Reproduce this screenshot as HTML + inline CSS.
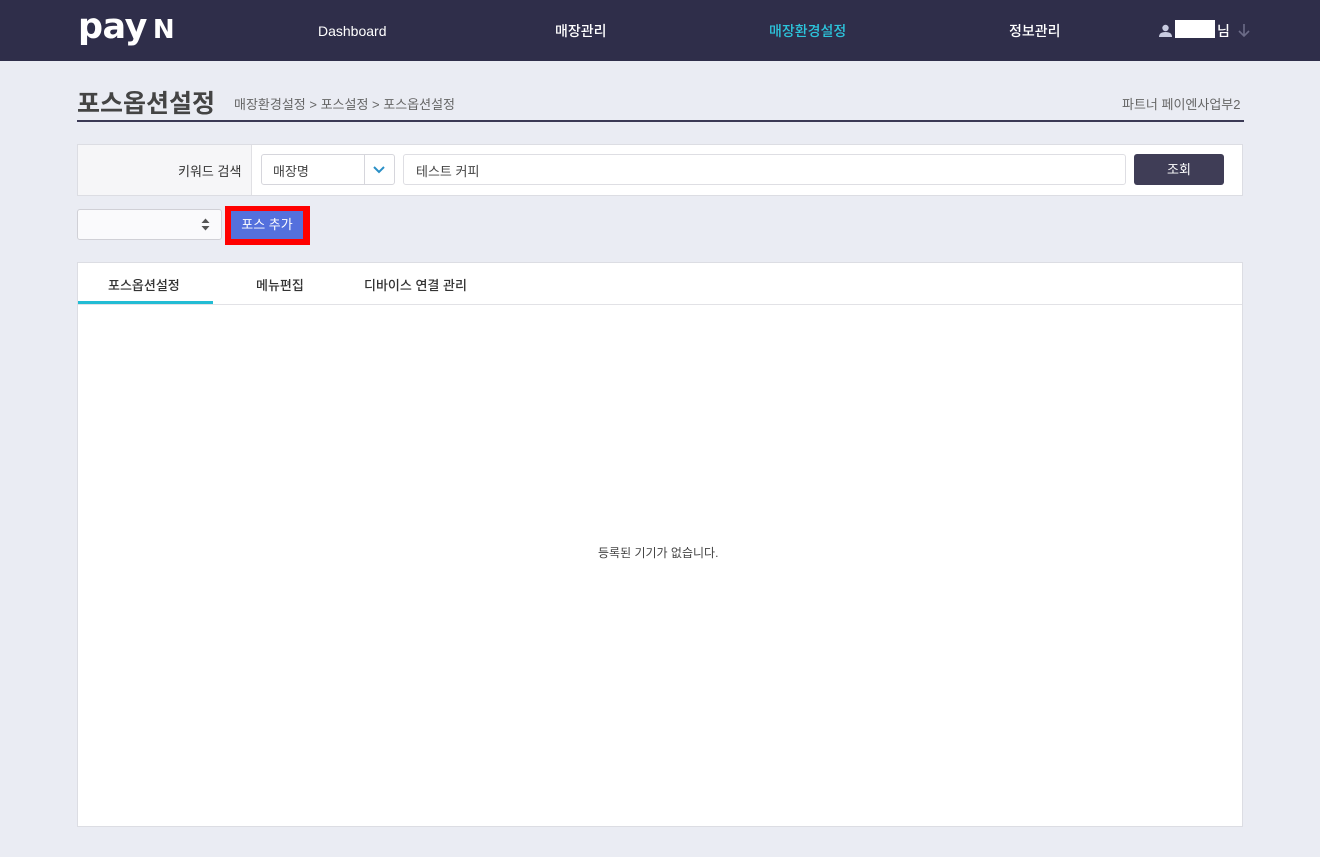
<!DOCTYPE html>
<html><head><meta charset="utf-8"><style>
*{box-sizing:border-box;margin:0;padding:0}
body{width:1320px;height:857px;background:#eaecf3;font-family:"Liberation Sans","Noto Sans CJK KR",sans-serif;position:relative;overflow:hidden;color:#333}
.hdr{position:absolute;left:0;top:0;width:1320px;height:61px;background:#2f2e4a}
.a{position:absolute}
.nav{position:absolute;top:21px;font-size:14px;color:#fff;font-weight:500}
</style></head><body>
<div class="hdr">
<div class="a" style="left:78px;top:7px;font-size:35px;color:#fff;font-weight:bold;letter-spacing:-0.5px;font-family:'DejaVu Sans',sans-serif">pay<span style="font-size:26px;margin-left:6px">N</span></div>
<div class="nav" style="left:318px;top:23px">Dashboard</div>
<div class="nav" style="left:555px">매장관리</div>
<div class="nav" style="left:769px;color:#2cc5dc">매장환경설정</div>
<div class="nav" style="left:1009px">정보관리</div>
<svg class="a" style="left:1159px;top:24px" width="13" height="13" viewBox="0 0 13 13"><circle cx="6.5" cy="4" r="3.2" fill="#c8cbe0"/><path d="M0 13 Q0 8 6.5 8 Q13 8 13 13Z" fill="#c8cbe0"/></svg>
<div class="a" style="left:1175px;top:20px;width:40px;height:18px;background:#fff"></div>
<div class="nav" style="left:1217px;top:21px">님</div>
<svg class="a" style="left:1238px;top:23px" width="12" height="14"><path d="M6 1 V13 M1 8 L6 13 L11 8" stroke="#6c6c88" stroke-width="1.6" fill="none"/></svg>
</div>
<div class="a" style="left:77px;top:84px;font-size:25px;font-weight:bold;color:#444">포스옵션설정</div>
<div class="a" style="left:234px;top:94px;font-size:13px;color:#666">매장환경설정 &gt; 포스설정 &gt; 포스옵션설정</div>
<div class="a" style="left:1122px;top:94px;font-size:13px;color:#666">파트너 페이엔사업부2</div>
<div class="a" style="left:77px;top:120px;width:1167px;height:2px;background:#3b3a55"></div>
<div class="a" style="left:77px;top:144px;width:1166px;height:52px;background:#fff;border:1px solid #dcdde3"></div>
<div class="a" style="left:78px;top:145px;width:174px;height:50px;background:#f6f6f8;border-right:1px solid #e0e0e4"></div>
<div class="a" style="left:178px;top:161px;font-size:13px;color:#333">키워드 검색</div>
<div class="a" style="left:261px;top:154px;width:134px;height:31px;border:1px solid #d6d6dc;border-radius:3px;background:#fff"></div>
<div class="a" style="left:364px;top:155px;width:1px;height:29px;background:#d6d6dc"></div>
<div class="a" style="left:273px;top:161px;font-size:13px;color:#444">매장명</div>
<svg class="a" style="left:373px;top:166px" width="12" height="8"><path d="M1 1 L6 6 L11 1" stroke="#2a8fc6" stroke-width="2" fill="none"/></svg>
<div class="a" style="left:403px;top:154px;width:723px;height:31px;border:1px solid #dedee3;border-radius:3px;background:#fff"></div>
<div class="a" style="left:416px;top:161px;font-size:13px;color:#444">테스트 커피</div>
<div class="a" style="left:1134px;top:154px;width:90px;height:31px;background:#3f3d56;border-radius:3px;color:#fff;font-size:13px;text-align:center;line-height:31px">조회</div>
<div class="a" style="left:77px;top:209px;width:145px;height:31px;border:1px solid #d0d0d6;border-radius:3px;background:#fafafc"></div>
<svg class="a" style="left:201px;top:218px" width="9" height="13"><path d="M0.5 5 L4.5 0.5 L8.5 5Z M0.5 8 L4.5 12.5 L8.5 8Z" fill="#555"/></svg>
<div class="a" style="left:225px;top:206px;width:85px;height:39px;background:#f00"></div>
<div class="a" style="left:231px;top:211px;width:72px;height:28px;background:#5470dd;color:#fff;font-size:13px;text-align:center;line-height:27px">포스 추가</div>
<div class="a" style="left:77px;top:262px;width:1166px;height:565px;background:#fff;border:1px solid #dcdde3"></div>
<div class="a" style="left:78px;top:304px;width:1164px;height:1px;background:#e2e2e6"></div>
<div class="a" style="left:78px;top:301px;width:135px;height:3px;background:#22bcd4"></div>
<div class="a" style="left:108px;top:275px;font-size:13px;color:#333;font-weight:500">포스옵션설정</div>
<div class="a" style="left:256px;top:275px;font-size:13px;color:#333;font-weight:500">메뉴편집</div>
<div class="a" style="left:364px;top:275px;font-size:13px;color:#333;font-weight:500">디바이스 연결 관리</div>
<div class="a" style="left:598px;top:544px;font-size:12px;color:#444">등록된 기기가 없습니다.</div>
</body></html>
